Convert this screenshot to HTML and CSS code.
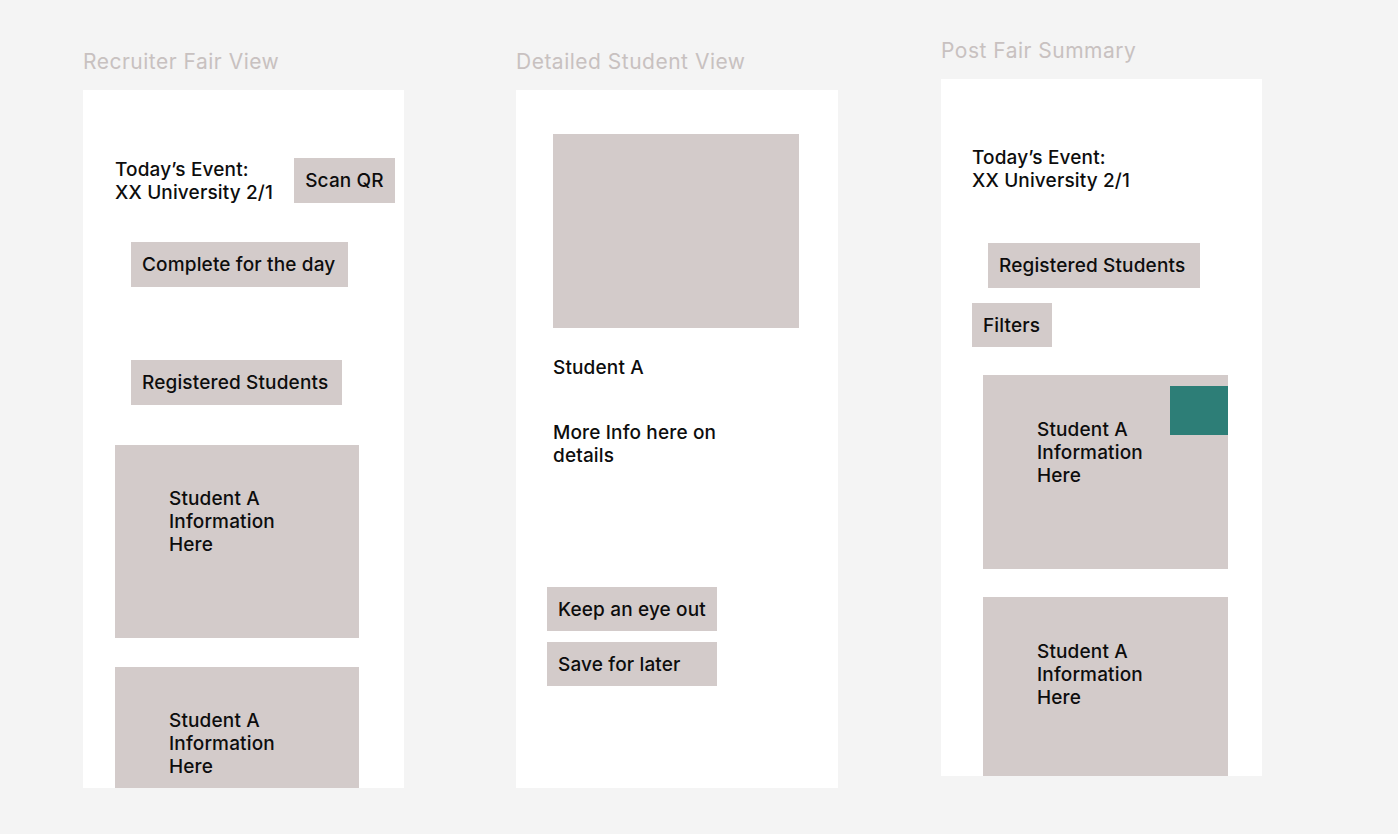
FILE: index.html
```html
<!DOCTYPE html>
<html>
<head>
<meta charset="utf-8">
<link rel="stylesheet" href="styles.css">
</head>
<body>
<div class="canvas">
  <section class="col col-1">
    <div class="label">Recruiter Fair View</div>
    <div class="frame">
      <div class="event-row">
        <div class="event-text">Today’s Event:<br>XX University 2/1</div>
        <div class="btn btn-scan">Scan QR</div>
      </div>
      <div class="btn btn-complete">Complete for the day</div>
      <div class="btn btn-registered">Registered Students</div>
      <div class="card card-1a">
        <div class="card-text">Student A<br>Information<br>Here</div>
      </div>
      <div class="card card-1b">
        <div class="card-text">Student A<br>Information<br>Here</div>
      </div>
    </div>
  </section>

  <section class="col col-2">
    <div class="label">Detailed Student View</div>
    <div class="frame">
      <div class="photo"></div>
      <div class="detail-name">Student A</div>
      <div class="detail-info">More Info here on<br>details</div>
      <div class="btn btn-keep">Keep an eye out</div>
      <div class="btn btn-save">Save for later</div>
    </div>
  </section>

  <section class="col col-3">
    <div class="label">Post Fair Summary</div>
    <div class="frame frame-3">
      <div class="event-text event-3">Today’s Event:<br>XX University 2/1</div>
      <div class="btn btn-registered-3">Registered Students</div>
      <div class="btn btn-filters">Filters</div>
      <div class="card card-3a">
        <div class="tag"></div>
        <div class="card-text">Student A<br>Information<br>Here</div>
      </div>
      <div class="card card-3b">
        <div class="card-text">Student A<br>Information<br>Here</div>
      </div>
    </div>
  </section>
</div>
</body>
</html>
```

FILE: styles.css
```css
* { box-sizing: border-box; }

html, body {
  margin: 0;
  padding: 0;
  background: #f4f4f4;
}

body {
  width: 1398px;
  height: 834px;
  overflow: hidden;
  font-family: Inter, "Noto Sans", sans-serif;
  color: #0d0d0d;
}

.canvas {
  display: flex;
  align-items: flex-start;
}

.col {
  width: 321px;
  flex: none;
}

.col-1 { margin-left: 83px; margin-top: 50px; }
.col-2 { margin-left: 112px; margin-top: 50px; width: 322px; }
.col-3 { margin-left: 103px; margin-top: 39px; }

.label {
  font-size: 21px;
  line-height: 24px;
  height: 24px;
  color: #c8c1c0;
  font-weight: 400;
  letter-spacing: 0.5px;
  margin-bottom: 16px;
  white-space: nowrap;
}

.frame {
  background: #ffffff;
  height: 698px;
  overflow: hidden;
  padding-top: 68px;
}

.frame-3 {
  height: 697px;
  padding-top: 67px;
}

.event-row {
  display: flex;
  align-items: flex-start;
  padding-left: 32px;
}

.event-text,
.card-text,
.detail-name,
.detail-info,
.btn {
  font-size: 19px;
  line-height: 23px;
  font-weight: 550;
  letter-spacing: 0.15px;
  white-space: nowrap;
}

.event-text {
  width: 179px;
}

.event-3 {
  margin-left: 31px;
}

.btn {
  background: #d3cbca;
  display: flex;
  align-items: center;
  padding: 0 11px;
}

.btn-scan {
  width: 101px;
  height: 45px;
  justify-content: center;
  padding: 0;
}

.btn-complete {
  margin-left: 48px;
  margin-top: 38px;
  width: 217px;
  height: 45px;
}

.btn-registered {
  margin-left: 48px;
  margin-top: 73px;
  width: 211px;
  height: 45px;
}

.card {
  background: #d3cbca;
  position: relative;
  padding-left: 54px;
  padding-top: 42px;
}

.card-1a {
  margin-left: 32px;
  margin-top: 40px;
  width: 244px;
  height: 193px;
}

.card-1b {
  margin-left: 32px;
  margin-top: 29px;
  width: 244px;
  height: 200px;
}

/* Detailed view */
.col-2 .frame {
  padding-top: 44px;
}

.photo {
  margin-left: 37px;
  width: 246px;
  height: 194px;
  background: #d3cbca;
}

.detail-name,
.detail-info {
  margin-left: 37px;
}

.detail-name { margin-top: 28px; }
.detail-info { margin-top: 42px; }

.btn-keep {
  margin-left: 31px;
  margin-top: 120px;
  width: 170px;
  height: 44px;
}

.btn-save {
  margin-left: 31px;
  margin-top: 11px;
  width: 170px;
  height: 44px;
}

/* Post fair summary */
.btn-registered-3 {
  margin-left: 47px;
  margin-top: 51px;
  width: 212px;
  height: 45px;
}

.btn-filters {
  margin-left: 31px;
  margin-top: 15px;
  width: 80px;
  height: 44px;
}

.card-3a {
  margin-left: 42px;
  margin-top: 28px;
  width: 245px;
  height: 194px;
  padding-top: 43px;
}

.card-3b {
  margin-left: 42px;
  margin-top: 28px;
  width: 245px;
  height: 200px;
  padding-top: 43px;
}

.tag {
  position: absolute;
  top: 11px;
  right: 0;
  width: 58px;
  height: 49px;
  background: #2d7e77;
}
```
